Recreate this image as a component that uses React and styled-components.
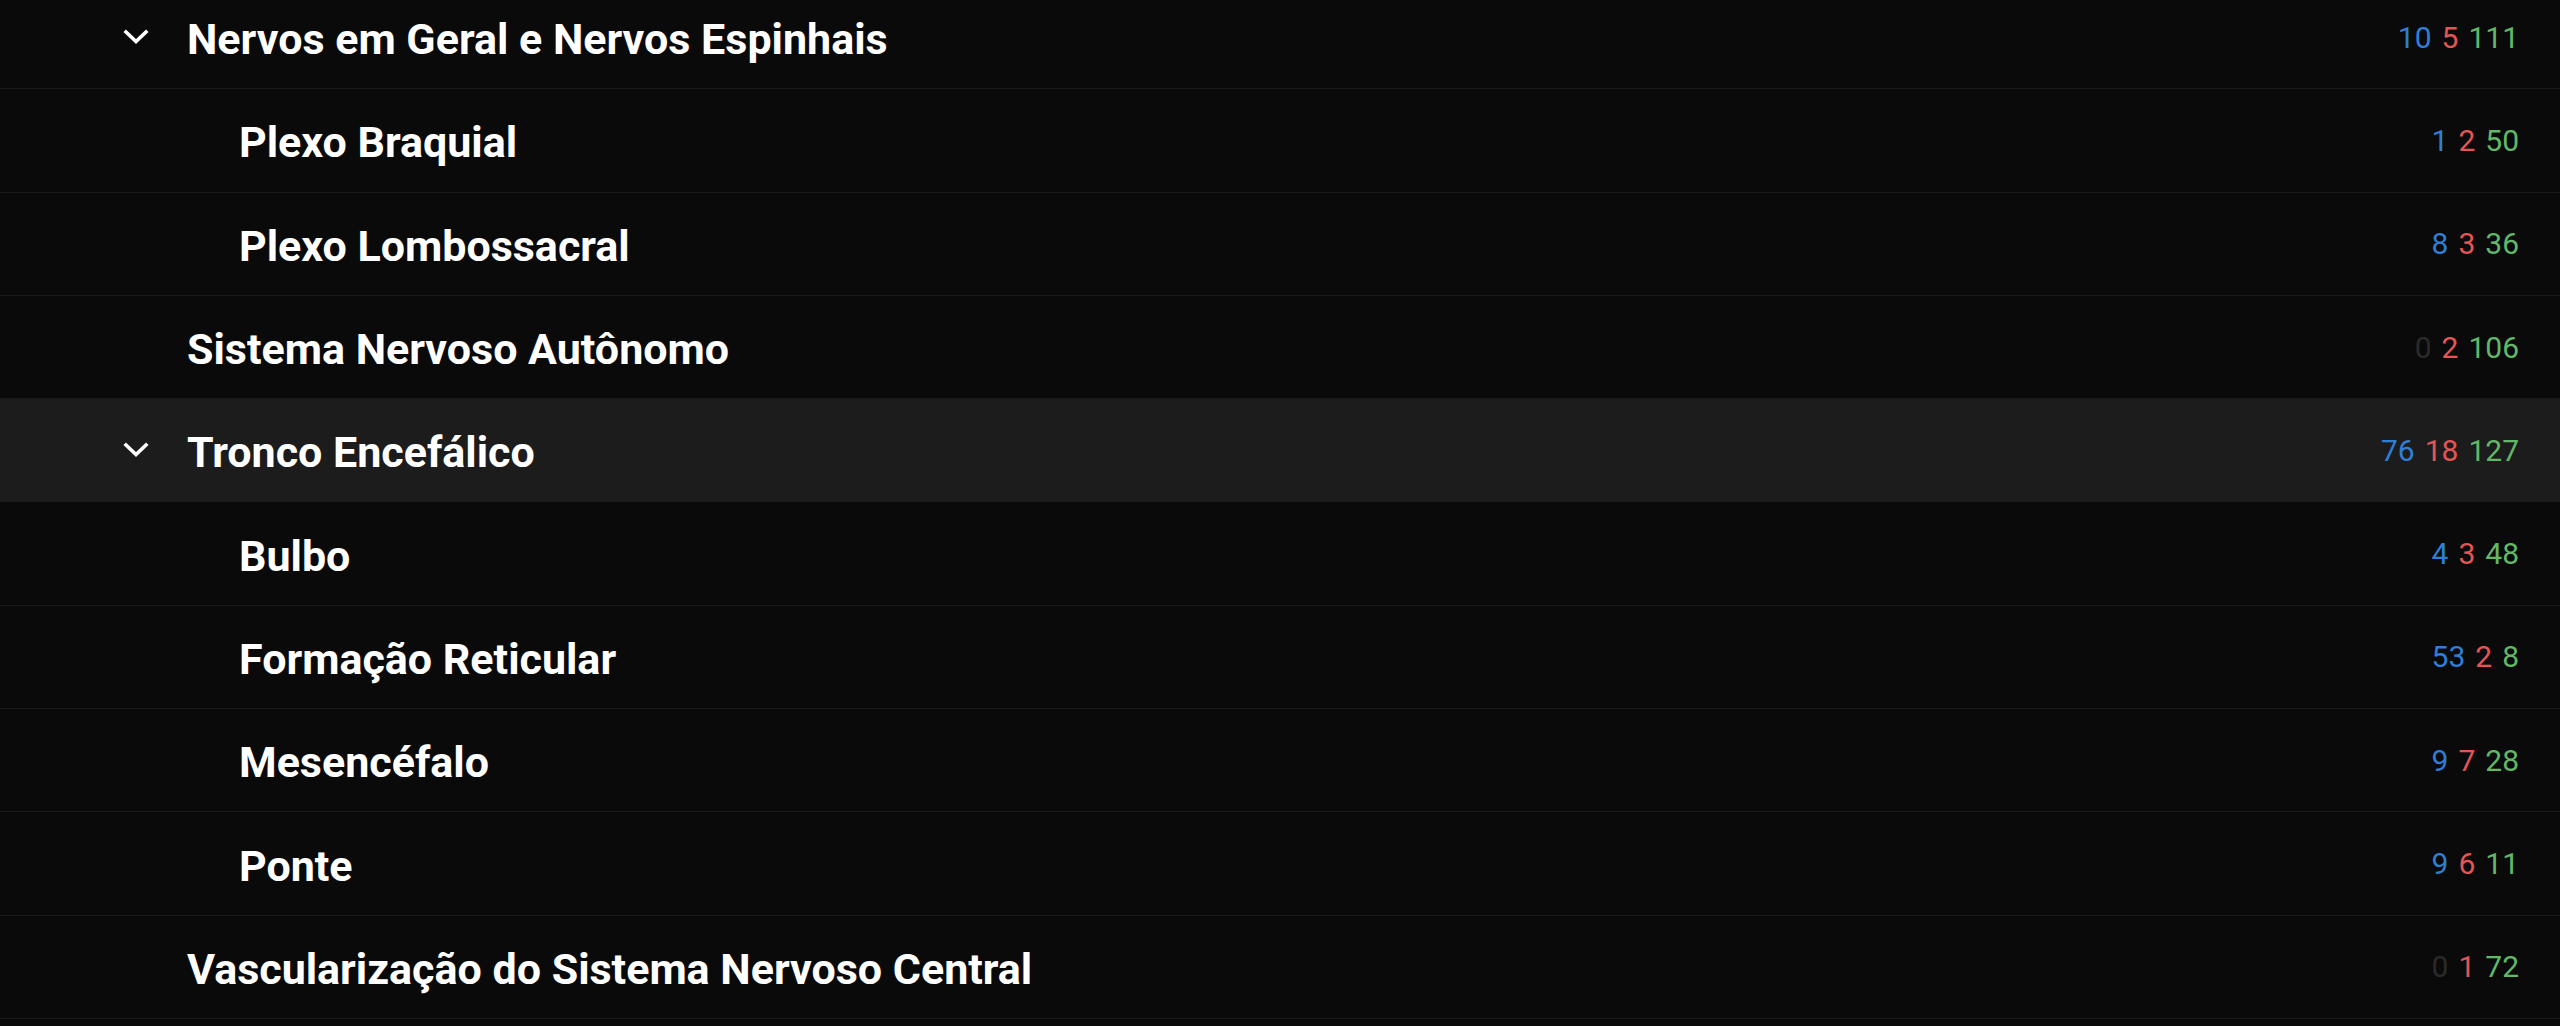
import React from "react";
import styled, { createGlobalStyle } from "styled-components";

const GlobalStyle = createGlobalStyle`
  html, body {
    margin: 0;
    padding: 0;
    background: #0a0a0a;
    overflow: hidden;
  }
  body {
    font-family: Roboto, "Noto Sans", "Liberation Sans", sans-serif;
  }
`;

const List = styled.div`
  display: flex;
  flex-direction: column;
  margin-top: -14px;
  background: #0a0a0a;
`;

const Row = styled.div`
  display: flex;
  align-items: center;
  height: 102.3px;
  border-bottom: 1px solid #1a1a1a;
  padding-left: ${(p) => 110 + (p.$level - 1) * 52}px;
  padding-right: 41px;
  background: ${(p) => (p.$active ? "#1c1c1c" : "#0a0a0a")};
`;

const ChevronSlot = styled.div`
  width: 78px;
  flex: 0 0 78px;
  display: flex;
  align-items: center;
  padding-left: 13px;
  box-sizing: border-box;
`;

const Title = styled.div`
  flex: 1;
  color: #ffffff;
  font-weight: 700;
  font-size: 43px;
  line-height: 50px;
  padding-top: 4px;
  margin-left: -1px;
  white-space: nowrap;
`;

const Counts = styled.div`
  display: flex;
  align-items: center;
  gap: 10px;
  font-size: 30px;
  font-weight: 400;
`;

const Count = styled.span`
  color: ${(p) => p.$color};
`;

const Chevron = () => (
  <svg width="26" height="16" viewBox="0 0 26 16">
    <polyline
      points="3,3 13,12.5 23,3"
      fill="none"
      stroke="#ffffff"
      strokeWidth="3.6"
      strokeLinecap="square"
      strokeLinejoin="miter"
    />
  </svg>
);

const BLUE = "#2f7fd6";
const RED = "#e35656";
const GREEN = "#62b866";
const ZERO = "#2a2a2a";

const rows = [
  { title: "Nervos em Geral e Nervos Espinhais", level: 1, open: true, c: [10, 5, 111] },
  { title: "Plexo Braquial", level: 2, c: [1, 2, 50] },
  { title: "Plexo Lombossacral", level: 2, c: [8, 3, 36] },
  { title: "Sistema Nervoso Autônomo", level: 1, c: [0, 2, 106] },
  { title: "Tronco Encefálico", level: 1, open: true, active: true, c: [76, 18, 127] },
  { title: "Bulbo", level: 2, c: [4, 3, 48] },
  { title: "Formação Reticular", level: 2, c: [53, 2, 8] },
  { title: "Mesencéfalo", level: 2, c: [9, 7, 28] },
  { title: "Ponte", level: 2, c: [9, 6, 11] },
  { title: "Vascularização do Sistema Nervoso Central", level: 1, c: [0, 1, 72] },
];

export default function App() {
  return (
    <>
      <GlobalStyle />
      <List>
        {rows.map((r) => (
          <Row key={r.title} $level={r.level} $active={r.active}>
            <ChevronSlot>{r.open ? <Chevron /> : null}</ChevronSlot>
            <Title>{r.title}</Title>
            <Counts>
              <Count $color={r.c[0] === 0 ? ZERO : BLUE}>{r.c[0]}</Count>
              <Count $color={r.c[1] === 0 ? ZERO : RED}>{r.c[1]}</Count>
              <Count $color={r.c[2] === 0 ? ZERO : GREEN}>{r.c[2]}</Count>
            </Counts>
          </Row>
        ))}
      </List>
    </>
  );
}
